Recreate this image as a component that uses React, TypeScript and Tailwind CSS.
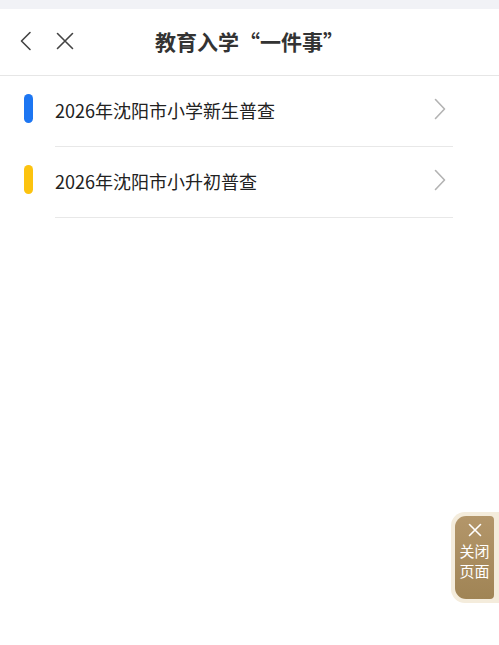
import React from 'react';

const items = [
    { title: '2026年沈阳市小学新生普查', color: 'bg-[#1d76f2]' },
    { title: '2026年沈阳市小升初普查', color: 'bg-[#fcc30f]' },
];

const Chevron = () => (
    <svg width="12" height="22" viewBox="0 0 12 22" fill="none">
        <path d="M1.5 1.5 L10.5 11 L1.5 20.5" stroke="#b3b3b3" strokeWidth="1.6" strokeLinecap="round" strokeLinejoin="round" />
    </svg>
);

export default function App() {
    return (
        <div className="relative w-[499px] h-[645px] bg-white overflow-hidden font-['Noto_Sans_CJK_SC','Noto_Sans',sans-serif]">
            {/* status strip */}
            <div className="h-[9px] bg-[#f1f2f6]" />

            {/* nav bar */}
            <div className="relative h-[67px] flex items-center border-b border-[#e6e6e6]">
                <div className="flex items-center pl-[19px] gap-[23px] text-[#444] -mt-[2px]">
                    <svg width="14" height="20" viewBox="0 0 14 20" fill="none">
                        <path d="M11 1.5 L2.5 10 L11 18.5" stroke="#444" strokeWidth="1.6" strokeLinecap="round" strokeLinejoin="round" />
                    </svg>
                    <svg width="18" height="18" viewBox="0 0 18 18" fill="none">
                        <path d="M1.5 1.5 L16.5 16.5 M16.5 1.5 L1.5 16.5" stroke="#444" strokeWidth="1.6" strokeLinecap="round" />
                    </svg>
                </div>
                <div className="absolute inset-0 flex items-center justify-center pointer-events-none -mt-[2px]">
                    <span className="text-[21px] font-bold text-[#333] leading-none">教育入学“一件事”</span>
                </div>
            </div>

            {/* list */}
            <div className="flex flex-col">
                {items.map((item) => (
                    <div key={item.title} className="flex items-stretch h-[71px]">
                        <div className="w-[55px] flex items-center pl-[24px]">
                            <div className={`w-[9px] h-[29px] rounded-full mb-[6px] ${item.color}`} />
                        </div>
                        <div className="flex-1 mr-[46px] flex items-center justify-between border-b border-[#e8e8e8] pr-[7px]">
                            <span className="text-[18px] text-[#222] leading-none -mt-[2px]">{item.title}</span>
                            <div className="-mt-[4px]">
                                <Chevron />
                            </div>
                        </div>
                    </div>
                ))}
            </div>

            {/* floating close */}
            <div className="absolute left-[451px] top-[512px] w-[52px] h-[91px] bg-[#f4ecdc] rounded-l-[14px] p-[4px] pr-[9px]">
                <div className="w-full h-full rounded-l-[11px] rounded-r-[4px] bg-gradient-to-b from-[#b3966a] to-[#a08455] flex flex-col items-center pt-[7px]">
                    <svg width="14" height="14" viewBox="0 0 14 14" fill="none">
                        <path d="M1.5 1.5 L12.5 12.5 M12.5 1.5 L1.5 12.5" stroke="#fff" strokeWidth="1.6" strokeLinecap="round" />
                    </svg>
                    <span className="mt-[4px] text-[15px] leading-[20px] text-white">关闭</span>
                    <span className="text-[15px] leading-[20px] text-white">页面</span>
                </div>
            </div>
        </div>
    );
}
